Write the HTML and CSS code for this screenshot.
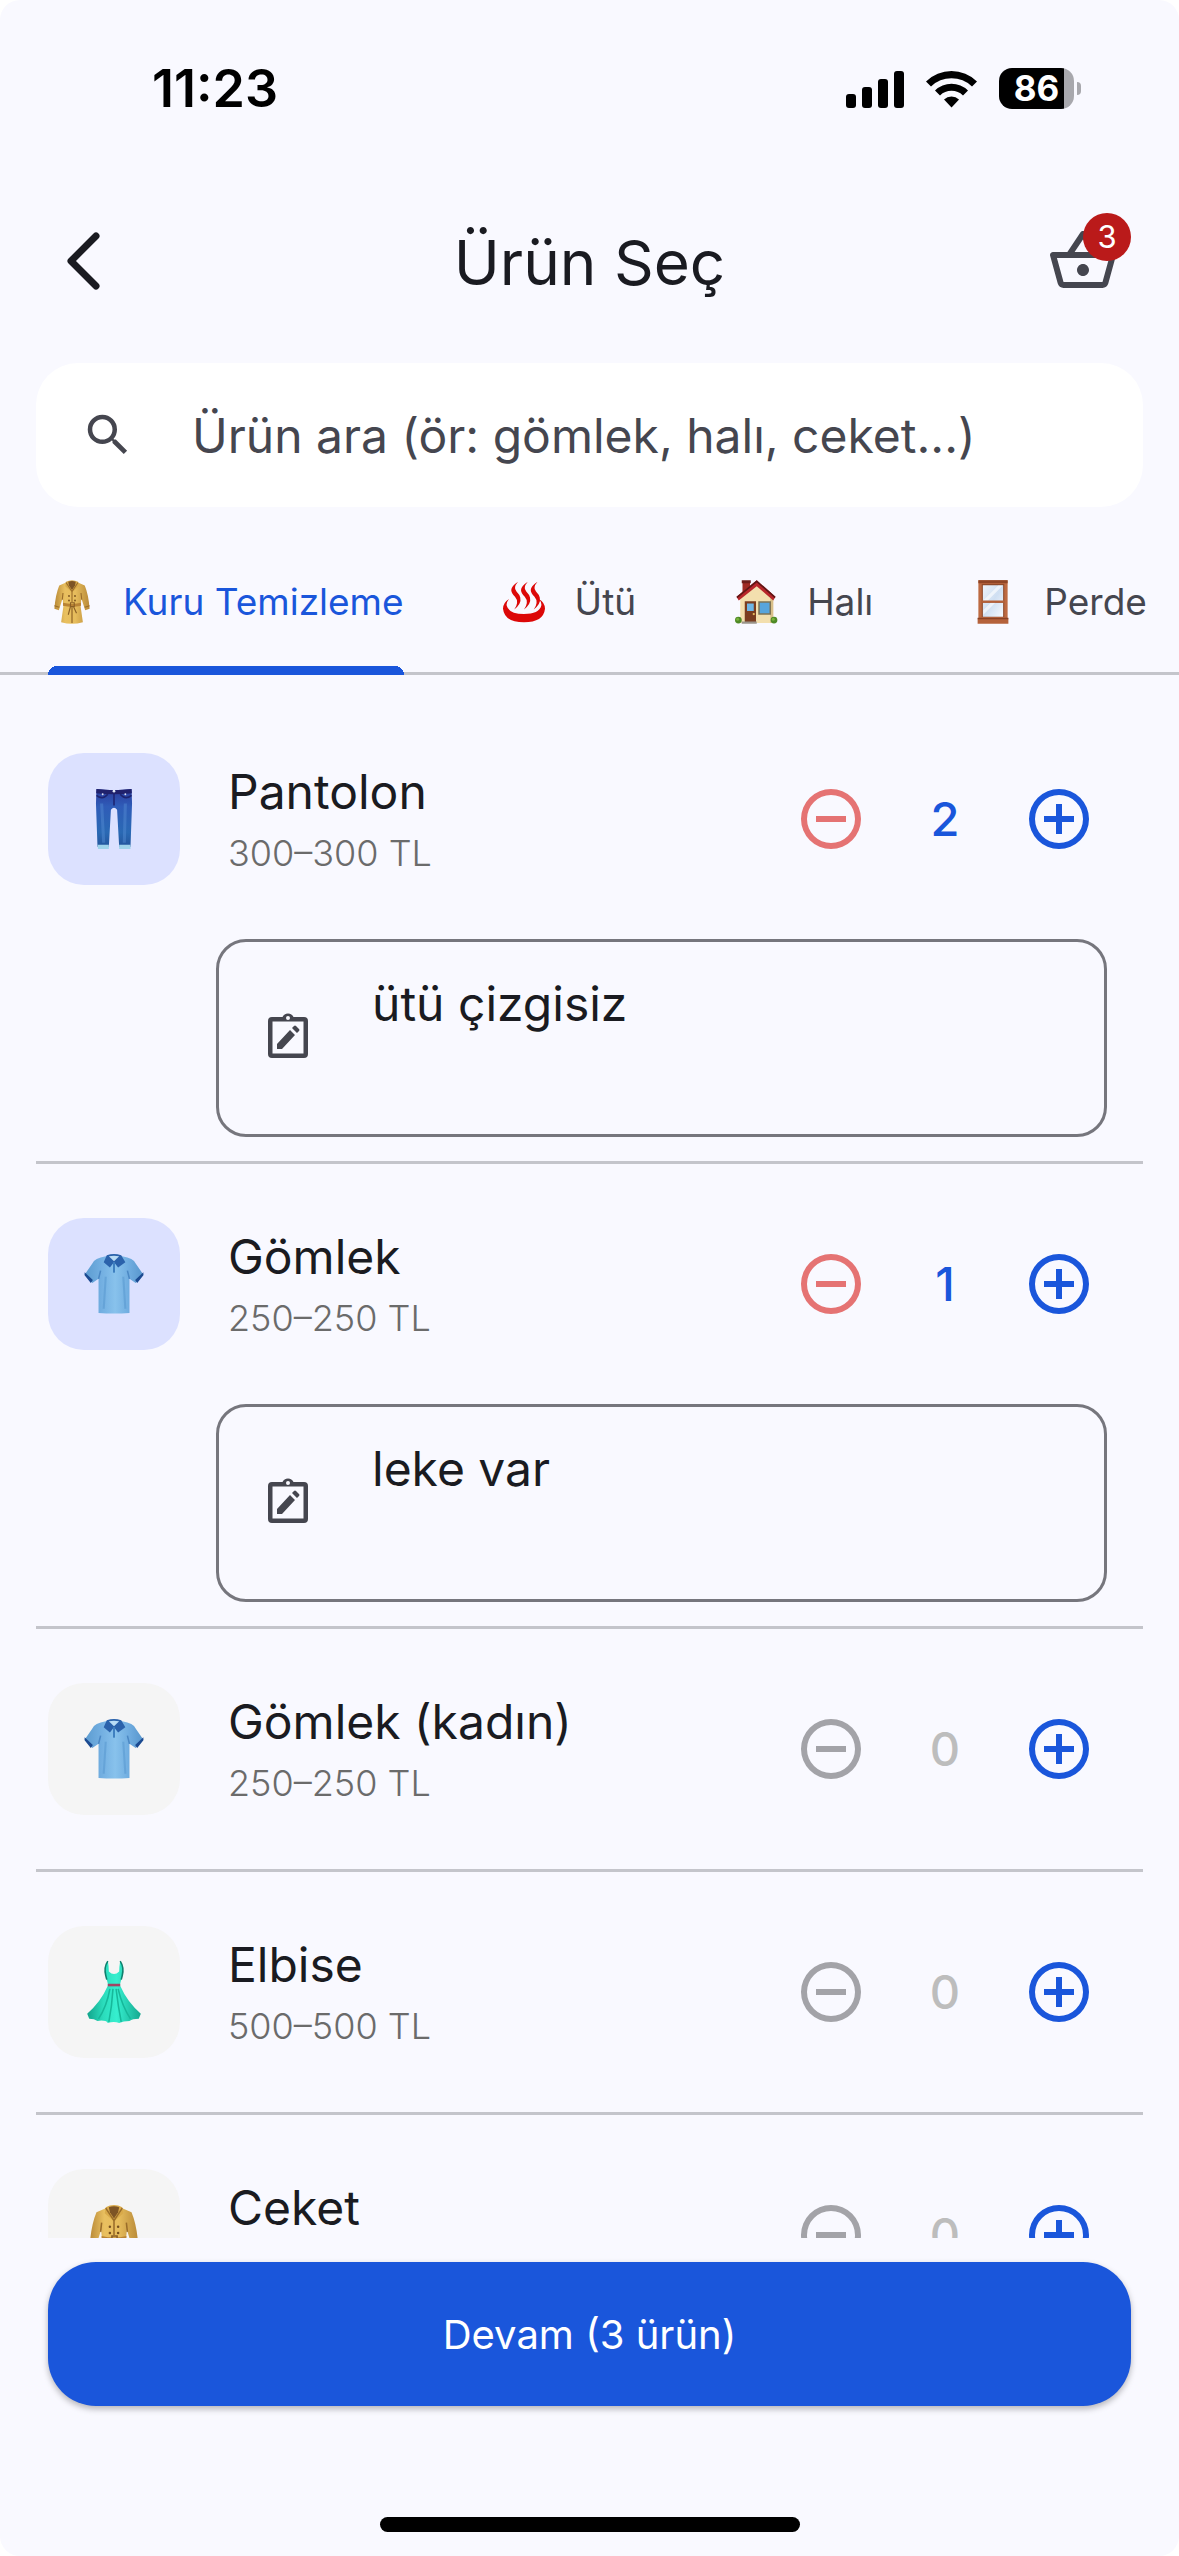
FILE: index.html
```html
<!DOCTYPE html>
<html lang="tr">
<head>
<meta charset="utf-8">
<meta name="viewport" content="width=device-width, initial-scale=1">
<title>Ürün Seç</title>
<link rel="stylesheet" href="styles.css">
</head>
<body>
<svg class="sprite" aria-hidden="true">
  <defs>
    <linearGradient id="g-coat" x1="0" x2="1" y1="0" y2="0">
      <stop offset="0" stop-color="#b98a38"/><stop offset=".3" stop-color="#e9c060"/><stop offset=".6" stop-color="#e6bc5c"/><stop offset="1" stop-color="#b98a38"/>
    </linearGradient>
    <linearGradient id="g-jean" x1="0" x2="0" y1="0" y2="1">
      <stop offset="0" stop-color="#2b3a9c"/><stop offset=".3" stop-color="#2f5cb8"/><stop offset=".75" stop-color="#2a69b4"/><stop offset="1" stop-color="#23559c"/>
    </linearGradient>
    <linearGradient id="g-shirt" x1="0" x2="1" y1="0" y2="0">
      <stop offset="0" stop-color="#5b9bd0"/><stop offset=".3" stop-color="#74b0e2"/><stop offset=".52" stop-color="#88c2ec"/><stop offset=".75" stop-color="#70ade0"/><stop offset="1" stop-color="#5795cc"/>
    </linearGradient>
    <linearGradient id="g-dress" x1="0" x2="1" y1="0" y2="0">
      <stop offset="0" stop-color="#12a48b"/><stop offset=".3" stop-color="#2bdcbc"/><stop offset=".55" stop-color="#36efcf"/><stop offset="1" stop-color="#14a88f"/>
    </linearGradient>
    <linearGradient id="g-pane" x1="0" x2="1" y1="0" y2="1">
      <stop offset="0" stop-color="#eef4fb"/><stop offset=".5" stop-color="#cfdff2"/><stop offset="1" stop-color="#f6f9fd"/>
    </linearGradient>
  </defs>
  <symbol id="e-coat" viewBox="0 0 64 64">
    <path d="M24 6 15 10Q10 22 8.500 41l6 2 5-16 1 11-3 21q14.500 4 29 0l-3-21 1-11 5 16 6-2Q54 22 49 10L40 6Z" fill="url(#g-coat)"/>
    <path d="M24 5q8-4 16 0l1 6-9 8-9-8Z" fill="#d9aa4a"/>
    <path d="M27 5q5-2 10 0l-1 5-4 6-4-6Z" fill="#7d5425"/>
    <path d="m24 6 8 12 8-12M32 18v14M20 20l-1 9M44 20l1 9M8.500 37l6.500 2M55.500 37 49 39" fill="none" stroke="#9a6d2a" stroke-width="1.500"/>
    <path d="M20 33q12 3 24 0v4q-12 3-24 0Z" fill="#b98335"/>
    <path d="M30 33h5v5h-5ZM30 38l-3 11M34 38l4 9M32 38v22" fill="none" stroke="#8a5f25" stroke-width="1.500"/>
    <g fill="#77501f"><circle cx="28" cy="24" r="1.200"/><circle cx="36" cy="24" r="1.200"/><circle cx="28" cy="30" r="1.200"/><circle cx="36" cy="30" r="1.200"/></g>
  </symbol>
  <symbol id="e-spring" viewBox="0 0 64 64">
    <path d="M12 28Q4 33 4 41q2 18 28 18t28-18q0-8-8-13 4 5 3 9-3 11-23 11T9 37q-1-4 3-9Z" fill="#dc0808"/>
    <g fill="#dc0808">
      <path d="M24 5q-9 6-9 11 0 4 5 9 6 7-1 17 10-8 8-16-1-4-5-8-5-5 2-13Z"/>
      <path d="M37 5q-9 6-9 11 0 4 5 9 6 7-1 17 10-8 8-16-1-4-5-8-5-5 2-13Z"/>
      <path d="M50 5q-9 6-9 11 0 4 5 9 6 7-1 17 10-8 8-16-1-4-5-8-5-5 2-13Z"/>
    </g>
  </symbol>
  <symbol id="e-house" viewBox="0 0 64 64">
    <path d="M14 4h10v18H14Z" fill="#9f2a24"/><path d="M13 3h12v4H13Z" fill="#6d1d1a"/>
    <path d="M11 28 33 8l22 20v32H11Z" fill="#f3dfae"/><path d="M51 25l4 3v32h-4Z" fill="#d9c08a"/>
    <path d="M33 3 6 25l3 5L33 11l22 19 3-5Z" fill="#b8262a"/><path d="M33 3 6 25l1 2L33 6l24 21 1-2Z" fill="#5f1716"/>
    <path d="M17 31h15v29H17Z" fill="#7a3d20"/><path d="M20 34h9v10h-9Z" fill="#6fb6e6"/><circle cx="29" cy="48" r="1.500" fill="#e8c060"/>
    <path d="M35 31h17v18H35Z" fill="#7d7355"/><path d="M37 33h13v14H37Z" fill="#58a5dc"/>
    <path d="M13 58h20v3H13Z" fill="#9a948a"/>
    <circle cx="8.500" cy="56" r="4.500" fill="#4f8a26"/><circle cx="56" cy="56" r="4.500" fill="#4f8a26"/>
    <circle cx="7.500" cy="55" r="2" fill="#79b23c"/><circle cx="55" cy="55" r="2" fill="#79b23c"/>
  </symbol>
  <symbol id="e-window" viewBox="0 0 64 64">
    <path d="M12.500 3h39v51h-39Z" fill="#bd6a42"/><path d="M12.500 3h39v4h-39Z" fill="#8f4526"/>
    <path d="M11.500 54h41v7h-41Z" fill="#b5623b"/><path d="M11.500 53h41v2h-41Z" fill="#8a4224"/>
    <path d="M17 8h30v44H17Z" fill="#8f4a2b"/>
    <path d="M18.500 9.500h27v21h-27ZM18.500 33h27v18.500h-27Z" fill="url(#g-pane)"/>
    <path d="m19 30 20-20h6L25 30ZM19 43l10-10h6L19 49Z" fill="#fff" opacity=".6"/>
    <path d="M17 30h30v3H17Z" fill="#b5623b"/>
  </symbol>
  <symbol id="e-jeans" viewBox="0 0 64 64">
    <path d="M15 3q17 2 34 0l.5 14L48 59H37l-2-36q-3-4-6 0l-2 36H16L14.500 17Z" fill="url(#g-jean)"/>
    <path d="M15 3q17 2 34 0l.3 4q-17 2-34.600 0Z" fill="#20216c"/>
    <path d="M15 9q6 5 11-1M49 9q-6 5-11-1M32 6v13" fill="none" stroke="#1d2470" stroke-width="1.500"/>
    <path d="M20 17l2 38M43 17l-1 38" stroke="#568dd4" stroke-width="3" opacity=".45"/>
    <path d="M16 57h11v4H16.500ZM37 57h11v4H37Z" fill="#9fd3ea"/>
    <g fill="#dfe6f5"><circle cx="32" cy="5" r="1.300"/><circle cx="21" cy="8" r=".9"/><circle cx="43" cy="8" r=".9"/></g>
  </symbol>
  <symbol id="e-shirt" viewBox="0 0 64 64">
    <path d="M24 5Q13 7 11 12L3.500 23 11 31l6-4v33q15 1 30 0V27l6 4 7.500-8L53 12Q51 7 40 5Z" fill="url(#g-shirt)"/>
    <path d="M3.500 20.500 11.500 28l-2 3L3.500 23.500ZM60.500 20.500l-8 7.500 2 3 6-7.500Z" fill="#1b4a91"/>
    <path d="M25 4q7-2 14 0l4 7-7 5-4-5-4 5-6-5Z" fill="#2b62ab"/><path d="M27 5q5-1 10 0l-5 5Z" fill="#b9dcf5"/>
    <path d="M32 11v10" stroke="#3f80c0" stroke-width="2"/><path d="M17 27l2-8M47 27l-2-8" stroke="#4b88c4" stroke-width="1.500" fill="none"/>
    <path d="M24 25l-2 31M41 25l2 31" stroke="#5596cf" stroke-width="2" opacity=".5"/>
  </symbol>
  <symbol id="e-dress" viewBox="0 0 64 64">
    <path d="M26 2q-4 6-2 14l2 8v2Q19 42 6 53l2 5q5 0 8 2 8-1 10 2 6-2 11 0 4-2 10-2 3-2 9-2l2-5Q45 42 38 26v-2l2-8q2-8-2-14-1 6-1 10-5 5-10 0 0-5-1-10Z" fill="url(#g-dress)"/>
    <path d="M26 2q-4 6-2 14l1 4M38 2q4 6 2 14l-1 4" fill="none" stroke="#0e7f6d" stroke-width="1.500"/>
    <path d="M28 29Q25 46 17 58M31 29Q30 46 27 61M34 29q2 17 5 32M36 29q4 17 12 29" fill="none" stroke="#16b89a" stroke-width="1.500"/>
    <path d="M26 24h12v2.500H26Z" fill="#a34464"/>
  </symbol>
  <symbol id="i-minus" viewBox="0 0 24 24"><path d="M7 11v2h10v-2H7Zm5-9a10 10 0 1 0 0 20 10 10 0 0 0 0-20Zm0 18a8 8 0 1 1 0-16 8 8 0 0 1 0 16Z"/></symbol>
  <symbol id="i-plus" viewBox="0 0 24 24"><path d="M13 7h-2v4H7v2h4v4h2v-4h4v-2h-4V7Zm-1-5a10 10 0 1 0 0 20 10 10 0 0 0 0-20Zm0 18a8 8 0 1 1 0-16 8 8 0 0 1 0 16Z"/></symbol>
  <symbol id="i-note" viewBox="0 0 40 46">
    <path fill-rule="evenodd" d="M4 5h10.500a6 6 0 0 1 11 0H36a4 4 0 0 1 4 4v33a4 4 0 0 1-4 4H4a4 4 0 0 1-4-4V9a4 4 0 0 1 4-4Zm.5 4.500v32h31v-32ZM20 4a2 2 0 1 0 0 4 2 2 0 0 0 0-4Z"/>
    <path d="M9 32 22 18l5 5-13 14H9ZM24 16l2-2q1-1 2 0l3 3q1 1 0 2l-2 2Z"/>
  </symbol>
</svg>

<div class="app">
  <div class="status">
    <time class="status-time">11:23</time>
    <div class="status-icons">
      <svg class="signal" viewBox="0 0 58 38" aria-hidden="true"><rect y="24" width="10" height="14" rx="3"/><rect x="16" y="17" width="10" height="21" rx="3"/><rect x="32" y="9" width="10" height="29" rx="3"/><rect x="48" y="1" width="10" height="37" rx="3"/></svg>
      <svg class="wifi" viewBox="0 0 51 38" aria-hidden="true">
        <path d="M0 11.500a36.500 36.500 0 0 1 51 0l-5 5a29.500 29.500 0 0 0-41 0Z"/>
        <path d="M9 20.500a23.700 23.700 0 0 1 33 0l-5 5a16.600 16.600 0 0 0-23 0Z"/>
        <path d="M18 29.500a10.800 10.800 0 0 1 15 0L25.500 37.500Z"/>
      </svg>
      <div class="battery"><span class="battery-body">86</span><span class="battery-nub"></span></div>
    </div>
  </div>

  <header class="topbar">
    <button class="icon-btn" type="button" aria-label="Geri">
      <svg viewBox="0 0 72 72" aria-hidden="true"><path d="M36 11 11 36l25 25" fill="none" stroke="#1a1b21" stroke-width="7" stroke-linecap="round" stroke-linejoin="round"/></svg>
    </button>
    <h1 class="title">Ürün Seç</h1>
    <button class="icon-btn cart" type="button" aria-label="Sepet">
      <svg viewBox="0 0 24 24" aria-hidden="true"><path d="M22 9h-4.790l-4.380-6.560c-.19-.28-.51-.42-.83-.42s-.64.14-.83.43L6.790 9H2c-.55 0-1 .45-1 1 0 .09.01.18.04.27l2.540 9.270c.23.84 1 1.460 1.920 1.460h13c.92 0 1.690-.62 1.930-1.460l2.540-9.270L23 10c0-.55-.45-1-1-1zM12 4.800L14.800 9H9.200L12 4.800zM18.500 19l-12.990.01L3.310 11H20.700l-2.200 8zM12 13c-1.100 0-2 .9-2 2s.9 2 2 2 2-.9 2-2-.9-2-2-2z"/></svg>
      <span class="badge">3</span>
    </button>
  </header>

  <label class="search">
    <svg viewBox="0 0 24 24" aria-hidden="true"><path d="M15.500 14h-.79l-.28-.27A6.471 6.471 0 0 0 16 9.500 6.500 6.500 0 1 0 9.500 16c1.610 0 3.090-.59 4.230-1.570l.27.28v.79l5 4.990L20.490 19l-4.990-5zm-6 0C7.010 14 5 11.990 5 9.500S7.010 5 9.500 5 14 7.010 14 9.500 11.990 14 9.500 14z"/></svg>
    <input type="text" placeholder="Ürün ara (ör: gömlek, halı, ceket...)" aria-label="Ürün ara">
  </label>

  <nav class="tabs">
    <button class="tab is-active" type="button"><svg aria-hidden="true"><use href="#e-coat"/></svg>Kuru Temizleme</button>
    <button class="tab" type="button"><svg aria-hidden="true"><use href="#e-spring"/></svg>Ütü</button>
    <button class="tab" type="button"><svg aria-hidden="true"><use href="#e-house"/></svg>Halı</button>
    <button class="tab" type="button"><svg aria-hidden="true"><use href="#e-window"/></svg>Perde</button>
  </nav>

  <main class="list">
    <article class="item is-picked">
      <div class="row">
        <div class="thumb"><svg aria-hidden="true"><use href="#e-jeans"/></svg></div>
        <div class="info"><h2 class="name">Pantolon</h2><p class="price">300–300 TL</p></div>
        <div class="stepper">
          <button class="step minus" type="button" aria-label="Azalt"><svg aria-hidden="true"><use href="#i-minus"/></svg></button>
          <output class="count">2</output>
          <button class="step plus" type="button" aria-label="Artır"><svg aria-hidden="true"><use href="#i-plus"/></svg></button>
        </div>
      </div>
      <label class="note"><svg aria-hidden="true"><use href="#i-note"/></svg><textarea rows="2" aria-label="Pantolon notu">ütü çizgisiz</textarea></label>
    </article>
    <article class="item is-picked">
      <div class="row">
        <div class="thumb"><svg aria-hidden="true"><use href="#e-shirt"/></svg></div>
        <div class="info"><h2 class="name">Gömlek</h2><p class="price">250–250 TL</p></div>
        <div class="stepper">
          <button class="step minus" type="button" aria-label="Azalt"><svg aria-hidden="true"><use href="#i-minus"/></svg></button>
          <output class="count">1</output>
          <button class="step plus" type="button" aria-label="Artır"><svg aria-hidden="true"><use href="#i-plus"/></svg></button>
        </div>
      </div>
      <label class="note"><svg aria-hidden="true"><use href="#i-note"/></svg><textarea rows="2" aria-label="Gömlek notu">leke var</textarea></label>
    </article>
    <article class="item">
      <div class="row">
        <div class="thumb"><svg aria-hidden="true"><use href="#e-shirt"/></svg></div>
        <div class="info"><h2 class="name">Gömlek (kadın)</h2><p class="price">250–250 TL</p></div>
        <div class="stepper">
          <button class="step minus" type="button" aria-label="Azalt" disabled><svg aria-hidden="true"><use href="#i-minus"/></svg></button>
          <output class="count">0</output>
          <button class="step plus" type="button" aria-label="Artır"><svg aria-hidden="true"><use href="#i-plus"/></svg></button>
        </div>
      </div>
    </article>
    <article class="item">
      <div class="row">
        <div class="thumb"><svg aria-hidden="true"><use href="#e-dress"/></svg></div>
        <div class="info"><h2 class="name">Elbise</h2><p class="price">500–500 TL</p></div>
        <div class="stepper">
          <button class="step minus" type="button" aria-label="Azalt" disabled><svg aria-hidden="true"><use href="#i-minus"/></svg></button>
          <output class="count">0</output>
          <button class="step plus" type="button" aria-label="Artır"><svg aria-hidden="true"><use href="#i-plus"/></svg></button>
        </div>
      </div>
    </article>
    <article class="item">
      <div class="row">
        <div class="thumb"><svg aria-hidden="true"><use href="#e-coat"/></svg></div>
        <div class="info"><h2 class="name">Ceket</h2></div>
        <div class="stepper">
          <button class="step minus" type="button" aria-label="Azalt" disabled><svg aria-hidden="true"><use href="#i-minus"/></svg></button>
          <output class="count">0</output>
          <button class="step plus" type="button" aria-label="Artır"><svg aria-hidden="true"><use href="#i-plus"/></svg></button>
        </div>
      </div>
    </article>
  </main>

  <footer class="bottom">
    <button class="continue" type="button">Devam (3 ürün)</button>
    <div class="home-bar"></div>
  </footer>
</div>
</body>
</html>
```
FILE: styles.css
```css
:root {
  --bg: #f9f9ff;
  --ink: #1a1b21;
  --ink-soft: #45464f;
  --blue: #1a56db;
  --line: #c4c5cb;
}

* { box-sizing: border-box; }

html { background: #fff; }

body {
  margin: 0;
  font-family: Inter, "Liberation Sans", sans-serif;
  font-weight: 400;
  color: var(--ink);
}

button, input, textarea { font: inherit; color: inherit; margin: 0; padding: 0; border: 0; background: none; }
button { cursor: pointer; }
h1, h2, p { margin: 0; font-weight: inherit; }
svg { display: block; flex: none; }

.sprite { position: absolute; width: 0; height: 0; }

.app {
  display: flex;
  flex-direction: column;
  height: 100vh;
  overflow: hidden;
  border-radius: 20px;
  background: var(--bg);
}

/* Status bar */
.status {
  display: flex;
  flex: none;
  justify-content: space-between;
  align-items: center;
  height: 177px;
  padding: 0 98px 0 152px;
  color: #000;
}
.status-time { font-size: 52px; font-weight: 600; line-height: 60px; }
.status-icons { display: flex; align-items: center; gap: 22px; }
.signal { width: 58px; height: 38px; }
.wifi { width: 51px; height: 38px; }
.battery { display: flex; align-items: center; gap: 3px; }
.battery-body {
  width: 75px;
  height: 41px;
  border-radius: 13px;
  background: linear-gradient(90deg, #000 65px, #a8a8ad 65px);
  color: #fff;
  font-size: 35px;
  font-weight: 700;
  line-height: 41px;
  text-align: center;
}
.battery-nub { width: 4px; height: 13px; border-radius: 0 4px 4px 0; background: #a8a8ad; }

/* Top bar */
.topbar {
  display: flex;
  flex: none;
  align-items: center;
  justify-content: space-between;
  height: 168px;
  padding: 0 60px;
}
.icon-btn { position: relative; width: 72px; height: 72px; }
.icon-btn svg { width: 72px; height: 72px; fill: var(--ink-soft); }
.title { font-size: 62px; line-height: 84px; padding-top: 4px; }
.badge {
  position: absolute;
  top: -12px;
  right: -12px;
  width: 48px;
  height: 48px;
  border-radius: 24px;
  background: #ba1a1a;
  color: #fff;
  font-size: 31px;
  line-height: 48px;
  text-align: center;
}

/* Search */
.search {
  display: flex;
  flex: none;
  align-items: center;
  gap: 57px;
  height: 144px;
  margin: 18px 36px 24px;
  padding: 0 45px;
  border-radius: 42px;
  background: #fff;
}
.search svg { width: 54px; height: 54px; fill: var(--ink-soft); }
.search input { flex: 1; min-width: 0; height: 100%; font-size: 48px; outline: 0; }
.search input::placeholder { color: var(--ink-soft); opacity: 1; }

/* Category tabs */
.tabs {
  display: flex;
  flex: none;
  gap: 96px;
  height: 144px;
  padding: 0 48px;
  overflow: hidden;
  box-shadow: inset 0 -3px var(--line);
}
.tab {
  display: flex;
  flex: none;
  align-items: center;
  gap: 27px;
  padding-bottom: 3px;
  color: var(--ink-soft);
  font-size: 37px;
  line-height: 48px;
  white-space: nowrap;
}
.tab svg { width: 48px; height: 48px; }
.tab.is-active {
  color: var(--blue);
  background: radial-gradient(circle at 9px 9px, var(--blue) 9px, transparent 9px) 0 100% / 9px 9px no-repeat,
    radial-gradient(circle at 0 9px, var(--blue) 9px, transparent 9px) 100% 100% / 9px 9px no-repeat,
    linear-gradient(var(--blue), var(--blue)) 50% 100% / calc(100% - 18px) 9px no-repeat;
}

/* Product list */
.list {
  flex: 1;
  min-height: 0;
  padding: 24px 36px 0;
  overflow-y: auto;
  scrollbar-width: none;
}
.item { border-bottom: 3px solid var(--line); }
.row {
  display: flex;
  align-items: center;
  height: 240px;
  padding: 0 12px;
}
.thumb {
  display: grid;
  flex: none;
  place-items: center;
  width: 132px;
  height: 132px;
  border-radius: 36px;
  background: #f5f5f5;
}
.thumb svg { width: 66px; height: 66px; }
.is-picked .thumb { background: #dce1ff; }
.info { flex: 1; height: 132px; padding: 7px 0 0 48px; }
.name { font-size: 48px; line-height: 63px; }
.price { font-size: 36px; font-weight: 300; line-height: 60px; color: #6b6b6b; }

.stepper { display: flex; flex: none; align-items: center; }
.step { display: grid; place-items: center; width: 144px; height: 144px; }
.step svg { width: 72px; height: 72px; fill: var(--blue); }
.minus svg { fill: #e57373; }
.minus:disabled svg { fill: #a3a3a8; }
.count {
  width: 84px;
  color: #bdbdbd;
  font-size: 47px;
  font-weight: 500;
  line-height: 60px;
  text-align: center;
}
.is-picked .count { color: var(--blue); }

.note {
  display: flex;
  align-items: center;
  gap: 64px;
  margin: 0 36px 24px 180px;
  padding: 30px 48px 36px 49px;
  border: 3px solid #76767d;
  border-radius: 30px;
}
.note svg { width: 40px; height: 46px; fill: var(--ink-soft); }
.note textarea {
  flex: 1;
  min-width: 0;
  height: 126px;
  font-size: 48px;
  line-height: 63px;
  outline: 0;
  resize: none;
  overflow: hidden;
}

/* Bottom action */
.bottom {
  display: flex;
  flex: none;
  flex-direction: column;
  align-items: center;
  gap: 111px;
  padding: 24px 48px;
}
.continue {
  width: 100%;
  height: 144px;
  border-radius: 48px;
  background: var(--blue);
  box-shadow: 0 3px 6px rgba(0, 0, 0, .28);
  color: #fff;
  font-size: 40px;
}
.home-bar { width: 420px; height: 15px; border-radius: 8px; background: #000; }
```
